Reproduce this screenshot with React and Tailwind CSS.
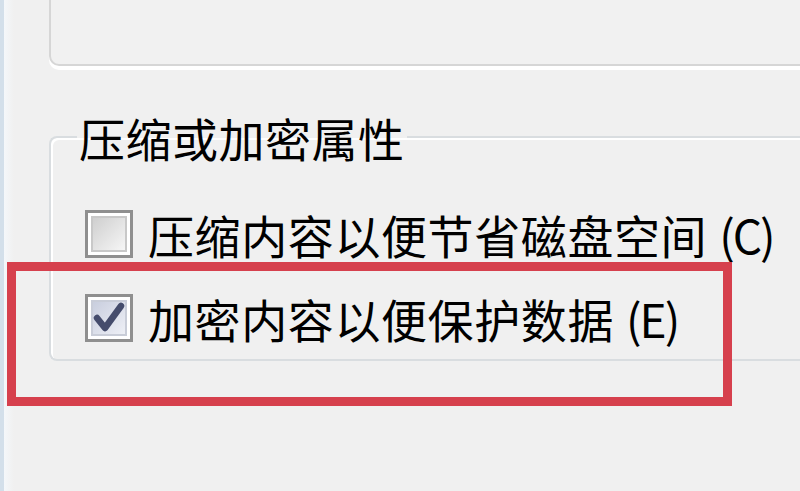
import React from "react";

function Box({ checked }) {
  return (
    <div className="w-[48px] h-[48px] shrink-0 border-[3px] border-[#8f8f8f] bg-white p-[3px]">
      <div
        className={
          checked
            ? "w-full h-full border-[2px] border-[#c9cdd8] bg-gradient-to-br from-[#c9cede] to-[#eef0f6] flex items-center justify-center"
            : "w-full h-full border-[2px] border-[#c8c8c8] bg-gradient-to-br from-[#cfcfcf] to-[#f6f6f6]"
        }
      >
        {checked && (
          <svg width="32" height="32" viewBox="0 0 32 32">
            <path d="M4 16 L12 26 L28 4" fill="none" stroke="#454c6c" strokeWidth="6.5" strokeLinecap="round" strokeLinejoin="round" />
          </svg>
        )}
      </div>
    </div>
  );
}

export default function App() {
  const font = { fontFamily: '"Noto Sans CJK SC", "Noto Sans", sans-serif' };
  return (
    <div className="relative w-[800px] h-[491px] overflow-hidden bg-[#f0f0f0] flex text-black" style={font}>
      <div className="w-[4px] bg-[#d3dfea]" />
      <div className="w-[10px] bg-gradient-to-r from-[#f4f7fa] to-[#f0f0f0]" />
      <div className="flex-1 pl-[35px] flex flex-col">
        <div className="-mt-[20px] h-[86px] border-l-[2px] border-b-[2px] border-[#d6d6d6] rounded-bl-[10px] bg-[#f1f1f1] shadow-[0_4px_0_0_#ffffff]" />
        <fieldset className="mt-[48px] h-[247px] border-[2px] border-r-0 border-[#d9dde0] rounded-l-[8px] pl-[28px] pb-[36px] min-w-0 shadow-[inset_2px_2px_0_0_#ffffff]">
          <legend className="px-[2px] text-[46px] leading-[46px] tracking-[0.5px] -ml-[2px]">压缩或加密属性</legend>
          <div className="flex flex-col gap-[36px] mt-[50px] pl-[6px]">
            <div className="flex items-center gap-[15px]">
              <Box checked={false} />
              <span className="text-[46px] leading-[48px] tracking-[0.6px] whitespace-nowrap">
                压缩内容以便节省磁盘空间<span className="ml-[12px] tracking-[-2px]">(C)</span>
              </span>
            </div>
            <div className="flex items-center gap-[15px]">
              <Box checked={true} />
              <span className="text-[46px] leading-[48px] tracking-[0.6px] whitespace-nowrap">
                加密内容以便保护数据<span className="ml-[12px] tracking-[-2px]">(E)</span>
              </span>
            </div>
          </div>
        </fieldset>
      </div>
      <div className="absolute left-[7px] top-[262px] w-[725px] h-[144px] border-[9px] border-[#d6404d]" />
    </div>
  );
}
